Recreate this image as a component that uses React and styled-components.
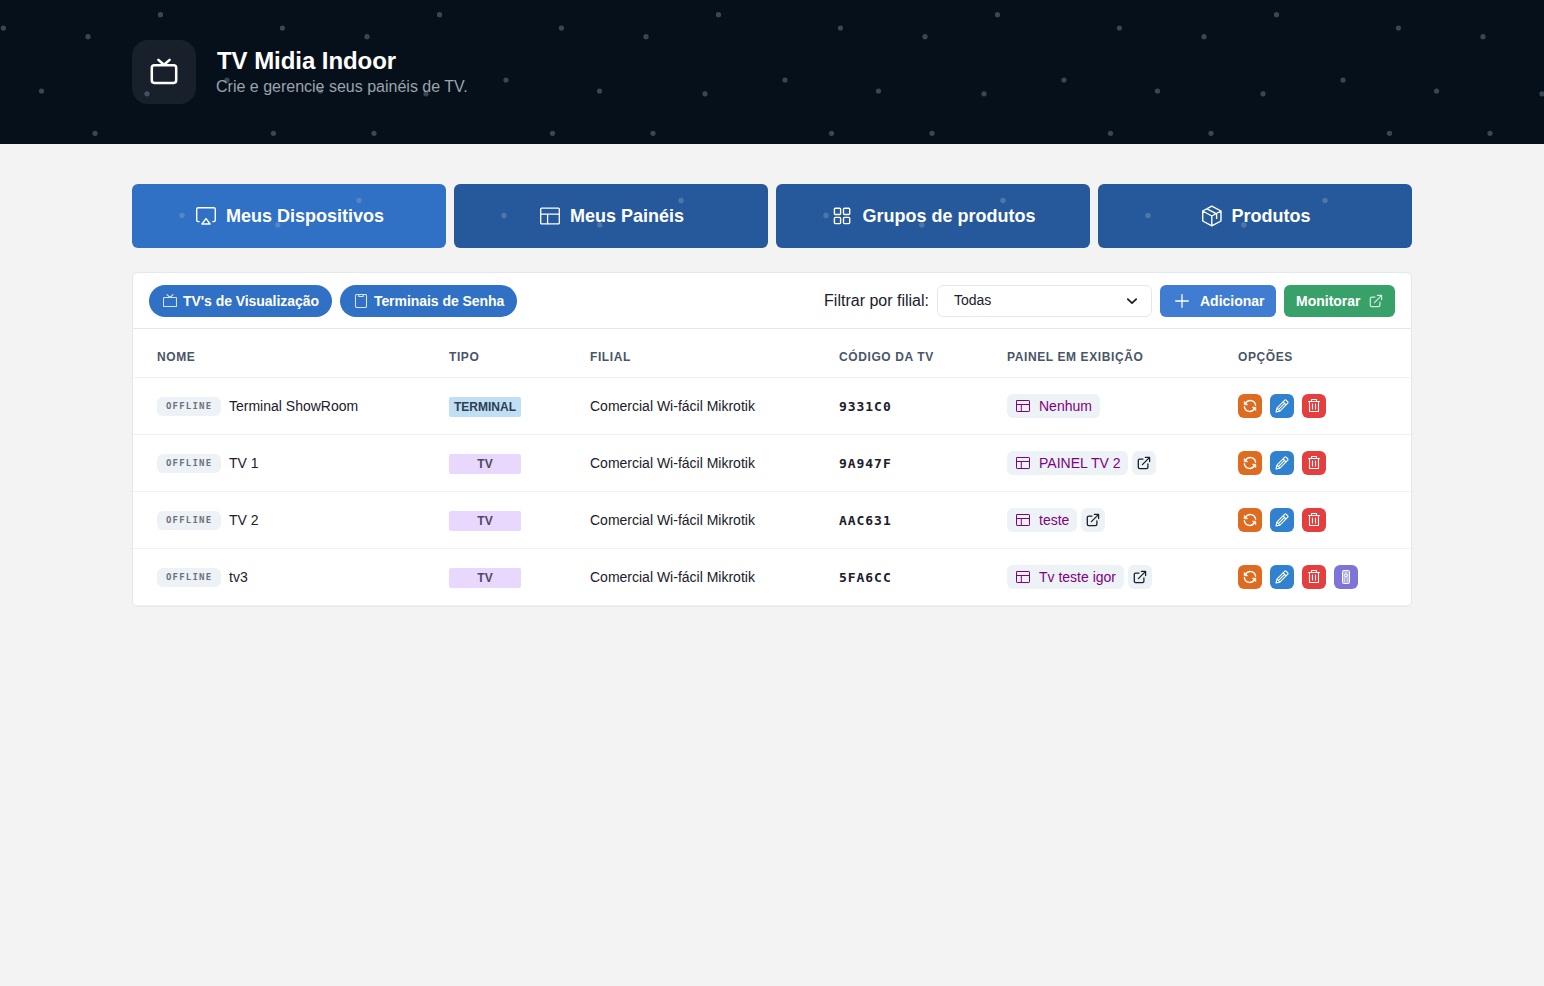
import React from 'react';
import styled, { createGlobalStyle } from 'styled-components';

const HEADER_DOTS = [[3.4, 28], [160.5, 14.7], [88, 36.7], [227, 80], [41.5, 91], [147, 93.8], [95, 133.3], [273.5, 133.3]],
    TAB_DOTS = [[50, 31.5], [145.8, 41], [227, 16.5]];

const HEADINGS = ['Nome', 'Tipo', 'Filial', 'Código da TV', 'Painel em exibição', 'Opções'];

const DEVICES = [
    { name: 'Terminal ShowRoom', type: 'Terminal', code: '9331C0', panel: 'Nenhum' },
    { name: 'TV 1', type: 'TV', code: '9A947F', panel: 'PAINEL TV 2', link: true },
    { name: 'TV 2', type: 'TV', code: 'AAC631', panel: 'teste', link: true },
    { name: 'tv3', type: 'TV', code: '5FA6CC', panel: 'Tv teste igor', link: true, remote: true },
];

const GlobalStyle = createGlobalStyle`
    * { box-sizing: border-box; }

    body {
        margin: 0;
        background-color: #f3f3f3;
        font-family: 'Liberation Sans', Arial, sans-serif;
        color: #1a202c;
    }

    button { font-family: inherit; border: none; cursor: pointer; }
`;

const Icon = styled.svg`
    flex: none;
    display: block;
    fill: none;
    stroke: currentColor;
    stroke-width: ${p => p.$stroke || 1};
    stroke-linecap: round; stroke-linejoin: round;
    opacity: ${p => p.$dim ? .8 : 1};
`;

const Dots = styled.svg`
    position: absolute; top: 0; left: 0;
    width: 100%; height: 100%;
    fill: #a0aec0;
    opacity: .34;
    pointer-events: none;
`;

const Header = styled.header`
    position: relative;
    height: 144px;
    padding: 40px 132px;
    background-color: #06101b;
`;

const HeaderContent = styled.div`
    display: flex; align-items: center; gap: 20px;
    height: 64px;
`;

const Logo = styled.div`
    display: flex; justify-content: center; align-items: center;
    width: 64px; height: 64px;
    border-radius: 16px;
    background-color: #18202b;
    color: #fff;
`;

const Title = styled.h1`
    margin: 0 0 0 1px;
    font-size: 24px; line-height: 29px;
    font-weight: bold;
    letter-spacing: -.06px;
    color: #fff;
`;

const SubTitle = styled.p`
    margin: 0;
    font-size: 16px; line-height: 24px;
    color: #9ca3ab;
`;

const Main = styled.main`
    padding: 40px 132px;
`;

const Tabs = styled.nav`
    display: grid; grid-template-columns: repeat(4, 1fr); gap: 8px;
    margin-bottom: 24px;
`;

const Tab = styled.button`
    position: relative;
    display: flex; justify-content: center; align-items: center; gap: 10px;
    height: 64px;
    padding: 0 0 0 2px;
    border-radius: 6px;
    background-color: ${p => p.$active ? '#3070c5' : '#26599b'};
    font-size: 18px;
    font-weight: bold;
    color: #fff;
`;

const Panel = styled.section`
    overflow: hidden;
    border: 1px solid #e2e8f0;
    border-radius: 6px;
    background-color: #fff;
`;

const Toolbar = styled.div`
    display: flex; align-items: center; gap: 8px;
    height: 56px;
    padding: 0 16px;
    border-bottom: 1px solid #e2e8f0;
`;

const Pill = styled.button`
    display: flex; align-items: center; gap: 6px;
    height: 32px;
    padding: 0 13px 0 14px;
    border-radius: 16px;
    background-color: #3070c5;
    font-size: 14px;
    font-weight: bold;
    letter-spacing: -.05px;
    color: #fff;
`;

const FilterLabel = styled.span`
    margin-left: auto;
    font-size: 16px;
`;

const Select = styled.div`
    display: flex; justify-content: space-between; align-items: center;
    width: 215px; height: 32px;
    padding: 0 13px 2px 16px;
    border: 1px solid #e2e8f0;
    border-radius: 6px;
    font-size: 14px;

    svg { margin-top: 2px; }
`;

const AddBtn = styled.button`
    display: flex; align-items: center; gap: 11px;
    width: 116px; height: 32px;
    padding: 0 0 0 15px;
    border-radius: 6px;
    background-color: #407cd1;
    font-size: 14px;
    font-weight: bold;
    color: #fff;
`;

const MonitorBtn = styled(AddBtn)`
    gap: 8px;
    width: 111px;
    padding: 0 0 0 12px;
    background-color: #38a169;
`;

const Row = styled.div`
    display: grid; grid-template-columns: 292px 141px 249px 168px 231px 1fr;
    align-items: center;
    height: 57px;
    border-bottom: 1px solid #edf2f7;
`;

const HeadRow = styled(Row)`
    height: 49px;
    padding-top: 7px;
`;

const Cell = styled.div`
    display: flex; align-items: center;
    padding-left: 24px;
    font-size: 14px;
    white-space: nowrap;
`;

const HeadCell = styled(Cell)`
    font-size: 12px;
    font-weight: bold;
    letter-spacing: .6px;
    text-transform: uppercase;
    color: #4a5568;
`;

const Status = styled.span`
    width: 64px; height: 19px;
    margin-right: 8px;
    padding-left: 9px;
    border-radius: 6px;
    background-color: #edf2f7;
    font-family: 'DejaVu Sans Mono', monospace;
    font-size: 9px; line-height: 19px;
    font-weight: bold;
    letter-spacing: 1.2px;
    text-transform: uppercase;
    color: #6b7280;
`;

const Type = styled.span`
    width: 72px; height: 20px;
    margin-top: 2px;
    border-radius: 2px;
    background-color: ${p => p.$terminal ? '#c0dff5' : '#e9d8fd'};
    font-size: 12px; line-height: 20px;
    font-weight: bold;
    text-align: center;
    text-transform: uppercase;
    color: ${p => p.$terminal ? '#2d3e50' : '#4f4862'};
`;

const Code = styled.span`
    margin-top: 1px;
    font-family: 'DejaVu Sans Mono', monospace;
    font-size: 13px;
    font-weight: bold;
    letter-spacing: .95px;
`;

const PanelChip = styled.span`
    display: flex; align-items: center; gap: 9px;
    height: 24px;
    padding: 0 8px 0 9px;
    border-radius: 6px;
    background-color: #edf2f7;
    color: #800080;
`;

const LinkBtn = styled.button`
    display: flex; justify-content: center; align-items: center;
    width: 24px; height: 24px;
    margin-left: 4px;
    padding: 0;
    border-radius: 6px;
    background-color: #edf2f7;
    color: #1a202c;
`;

const Options = styled.div`
    display: flex; gap: 8px;
`;

const OptionBtn = styled.button`
    display: flex; justify-content: center; align-items: center;
    width: 24px; height: 24px;
    padding: 0;
    border-radius: 6px;
    background-color: ${p => p.$color};
    color: #fff;
`;

function TvIcon() {
    return (
        <Icon width="28" height="28" viewBox="0 0 28 28" $stroke={2.5}>
            <rect x="1.8" y="7.2" width="24.4" height="17.7" rx="2.6" />
            <path d="M8.4 1.9 14 6.8l5.6-4.9" />
        </Icon>
    )
}

function SmallTvIcon() {
    return (
        <Icon width="14" height="14" viewBox="0 0 14 14" $stroke={1.1} $dim>
            <rect x=".5" y="3.5" width="13" height="9" rx=".8" />
            <path d="M4 .7 7 3.5 10 .7" />
        </Icon>
    )
}

function TerminalIcon() {
    return (
        <Icon width="14" height="14" viewBox="0 0 14 14" $stroke={1.1} $dim>
            <rect x="1.5" y=".5" width="11" height="13" rx="1.2" />
            <path d="M4.8 .5v2h4.4v-2" />
        </Icon>
    )
}

function AirplayIcon() {
    return (
        <Icon width="20" height="20" viewBox="0 0 20 20" $stroke={1.4}>
            <path d="M3.2 15.6H2.2A1.5 1.5 0 0 1 .7 14.1V3.2a1.5 1.5 0 0 1 1.5-1.5h15.6a1.5 1.5 0 0 1 1.5 1.5v10.9a1.5 1.5 0 0 1-1.5 1.5h-1" />
            <path d="M10 12.6 5.9 18h8.2Z" />
        </Icon>
    )
}

function LayoutIcon() {
    return (
        <Icon width="20" height="20" viewBox="0 0 20 20" $stroke={1.3}>
            <rect x=".7" y="2.2" width="18.6" height="15.6" rx=".9" />
            <path d="M.7 8.1h18.6M7.6 8.1v9.7" />
        </Icon>
    )
}

function SmallLayoutIcon() {
    return (
        <Icon width="14" height="14" viewBox="0 0 14 14">
            <rect x=".5" y="1.5" width="13" height="11" rx=".6" />
            <path d="M.5 5.5h13M5.3 5.5v7" />
        </Icon>
    )
}

function GridIcon() {
    return (
        <Icon width="20" height="20" viewBox="1 0 20 20" $stroke={1.4}>
            <rect x="2.4" y="2.3" width="6.2" height="6.2" rx="1" />
            <rect x="11.5" y="2.3" width="6.2" height="6.2" rx="1" />
            <rect x="2.4" y="11.4" width="6.2" height="6.2" rx="1" />
            <rect x="11.5" y="11.4" width="6.2" height="6.2" rx="1" />
        </Icon>
    )
}

function BoxIcon() {
    return (
        <Icon width="20" height="22" viewBox=".4 0 20 22" $stroke={1.4}>
            <path d="M10.2 1.1 19.4 6v10l-9.2 4.9L1.1 16V6ZM1.1 6l9.1 5 9.2-5M10.2 11v9.9M5.4 3.8l9.6 5v4.6" />
        </Icon>
    )
}

function ExternalIcon({ dim, stroke }) {
    return (
        <Icon width="14" height="14" viewBox="0 0 14 14" $stroke={stroke} $dim={dim}>
            <path d="M6 3.1H2.7a1.4 1.4 0 0 0-1.4 1.4v6.8a1.4 1.4 0 0 0 1.4 1.4h6.8a1.4 1.4 0 0 0 1.4-1.4V8" />
            <path d="M5.4 8.6 12.6 1.4M8.4 1.4h4.2v4.2" />
        </Icon>
    )
}

function SyncIcon() {
    return (
        <Icon width="14" height="14" viewBox="0 0 14 14" $stroke={1.4}>
            <path d="M2.6 4.4C5 .2 11.6.6 12.6 6.2M11.4 9.6C9 13.8 2.4 13.4 1.4 7.8" />
            <path d="M1.2 2.6v3.2h3.2ZM12.8 11.4V8.2H9.6Z" fill="currentColor" strokeWidth=".6" />
        </Icon>
    )
}

function PencilIcon() {
    return (
        <Icon width="14" height="14" viewBox="0 0 14 14" $stroke={1.1}>
            <path d="M1 13l.9-3.9L9.8 1.2a.9.9 0 0 1 1.2 0l1.8 1.8a.9.9 0 0 1 0 1.2l-7.9 7.9ZM8.1 2.9l3 3M1.9 9.1l3 3M3.6 10.4l6-6" />
        </Icon>
    )
}

function TrashIcon() {
    return (
        <Icon width="14" height="14" viewBox="0 0 14 14" $stroke={1.1}>
            <path d="M1.5 2.5h11M4.5 2.5v-2h5v2M2.5 2.5v10h9v-10M5.5 5v5M8.5 5v5" />
        </Icon>
    )
}

function RemoteIcon() {
    return (
        <Icon width="14" height="14" viewBox="0 0 14 14">
            <rect x="3.5" y=".5" width="7" height="13" rx="1" fill="#ffffff66" />
            <circle cx="7" cy="5.5" r="1.6" />
            <path d="M7 2.3v.2M5.6 9v.2M8.4 9v.2M5.6 11v.2M8.4 11v.2" />
        </Icon>
    )
}

function HeaderDots() {
    return (
        <Dots>
            <defs>
                <pattern id="headerDots" width="279" height="144" patternUnits="userSpaceOnUse">
                    {HEADER_DOTS.map(([x, y]) => <circle key={x} cx={x} cy={y} r="2.6" />)}
                </pattern>
            </defs>
            <rect width="100%" height="100%" fill="url(#headerDots)" />
        </Dots>
    )
}

function TabDots() {
    return (
        <Dots>
            {TAB_DOTS.map(([x, y]) => <circle key={x} cx={x} cy={y} r="2.7" />)}
        </Dots>
    )
}

function DeviceRow({ device }) {
    return (
        <Row>
            <Cell>
                <Status>Offline</Status>
                {device.name}
            </Cell>
            <Cell><Type $terminal={device.type === 'Terminal'}>{device.type}</Type></Cell>
            <Cell>Comercial Wi-fácil Mikrotik</Cell>
            <Cell><Code>{device.code}</Code></Cell>
            <Cell>
                <PanelChip><SmallLayoutIcon />{device.panel}</PanelChip>
                {device.link && <LinkBtn><ExternalIcon stroke={1.3} /></LinkBtn>}
            </Cell>
            <Cell>
                <Options>
                    <OptionBtn $color="#dd6b20"><SyncIcon /></OptionBtn>
                    <OptionBtn $color="#3182ce"><PencilIcon /></OptionBtn>
                    <OptionBtn $color="#e53e3e"><TrashIcon /></OptionBtn>
                    {device.remote && <OptionBtn $color="#7e74d6"><RemoteIcon /></OptionBtn>}
                </Options>
            </Cell>
        </Row>
    )
}

function App() {
    return (
        <>
            <GlobalStyle />
            <Header>
                <HeaderContent>
                    <Logo><TvIcon /></Logo>
                    <div>
                        <Title>TV Midia Indoor</Title>
                        <SubTitle>Crie e gerencie seus painéis de TV.</SubTitle>
                    </div>
                </HeaderContent>
                <HeaderDots />
            </Header>
            <Main>
                <Tabs>
                    <Tab $active><TabDots /><AirplayIcon />Meus Dispositivos</Tab>
                    <Tab><TabDots /><LayoutIcon />Meus Painéis</Tab>
                    <Tab><TabDots /><GridIcon />Grupos de produtos</Tab>
                    <Tab><TabDots /><BoxIcon />Produtos</Tab>
                </Tabs>
                <Panel>
                    <Toolbar>
                        <Pill><SmallTvIcon />TV's de Visualização</Pill>
                        <Pill><TerminalIcon />Terminais de Senha</Pill>
                        <FilterLabel>Filtrar por filial:</FilterLabel>
                        <Select>
                            Todas
                            <Icon width="12" height="12" viewBox="0 0 12 12" $stroke={1.8}>
                                <path d="M1.8 4.2 6 8.2l4.2-4" />
                            </Icon>
                        </Select>
                        <AddBtn>
                            <Icon width="14" height="14" viewBox="0 0 14 14" $stroke={1.3}>
                                <path d="M7 .7v12.6M.7 7h12.6" />
                            </Icon>
                            Adicionar
                        </AddBtn>
                        <MonitorBtn>Monitorar<ExternalIcon stroke={1.2} dim /></MonitorBtn>
                    </Toolbar>
                    <HeadRow>
                        {HEADINGS.map(text => <HeadCell key={text}>{text}</HeadCell>)}
                    </HeadRow>
                    {DEVICES.map(device => <DeviceRow key={device.code} device={device} />)}
                </Panel>
            </Main>
        </>
    )
}

export default App;
